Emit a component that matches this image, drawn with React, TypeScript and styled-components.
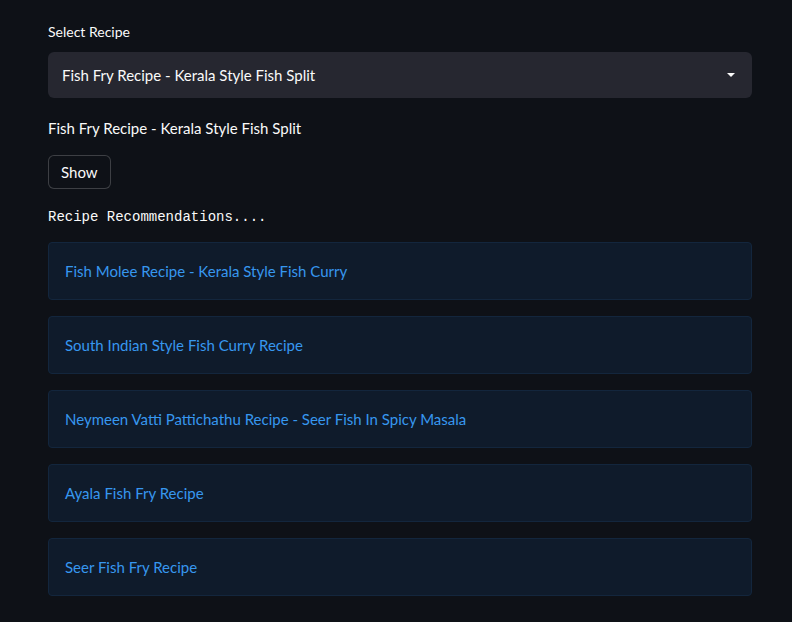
import React from "react";
import styled, { createGlobalStyle } from "styled-components";

const Global = createGlobalStyle`
  html, body { margin: 0; padding: 0; background: #0e1117; }
  body { font-family: Lato, "Noto Sans", sans-serif; color: #fafafa; }
`;

const Page = styled.div`
  width: 704px;
  margin: 0 0 0 48px;
  padding: 24px 0 20px 0;
  display: flex;
  flex-direction: column;
`;

const Label = styled.label`
  font-size: 14px;
  line-height: 16px;
  color: #fafafa;
  margin-bottom: 12px;
`;

const Select = styled.div`
  height: 46px;
  background: #262730;
  border-radius: 6px;
  display: flex;
  align-items: center;
  justify-content: space-between;
  padding: 0 16px 0 14px;
  font-size: 15px;
  padding-bottom: 1px;
  box-sizing: border-box;
`;

const Text = styled.div`
  font-size: 15px;
  line-height: 20px;
  margin-top: 20px;
`;

const Button = styled.button`
  align-self: flex-start;
  margin-top: 17px;
  height: 34px;
  padding: 0 12px;
  background: #0e1117;
  color: #fafafa;
  border: 1px solid rgba(250, 250, 250, 0.2);
  border-radius: 6px;
  font-family: Lato, "Noto Sans", sans-serif;
  font-size: 15px;
`;

const Mono = styled.div`
  font-family: "Liberation Mono", "DejaVu Sans Mono", monospace;
  font-size: 14px;
  line-height: 18px;
  margin-top: 19px;
  color: #fafafa;
`;

const List = styled.div`
  display: flex;
  flex-direction: column;
  gap: 16px;
  margin-top: 16px;
`;

const Card = styled.div`
  height: 58px;
  box-sizing: border-box;
  background: #0f1b2b;
  border: 1px solid #13263d;
  border-radius: 4px;
  display: flex;
  align-items: center;
  padding: 0 16px;
  color: #3797ef;
  font-size: 15px;
`;

const items = [
  "Fish Molee Recipe - Kerala Style Fish Curry",
  "South Indian Style Fish Curry Recipe",
  "Neymeen Vatti Pattichathu Recipe - Seer Fish In Spicy Masala",
  "Ayala Fish Fry Recipe",
  "Seer Fish Fry Recipe",
];

export default function App() {
  return (
    <>
      <Global />
      <Page>
        <Label>Select Recipe</Label>
        <Select>
          <span>Fish Fry Recipe - Kerala Style Fish Split</span>
          <svg width="10" height="6" viewBox="0 0 10 6">
            <path d="M1 1h8L5 5z" fill="#fafafa" />
          </svg>
        </Select>
        <Text>Fish Fry Recipe - Kerala Style Fish Split</Text>
        <Button>Show</Button>
        <Mono>Recipe Recommendations....</Mono>
        <List>
          {items.map((t) => (
            <Card key={t}>{t}</Card>
          ))}
        </List>
      </Page>
    </>
  );
}
